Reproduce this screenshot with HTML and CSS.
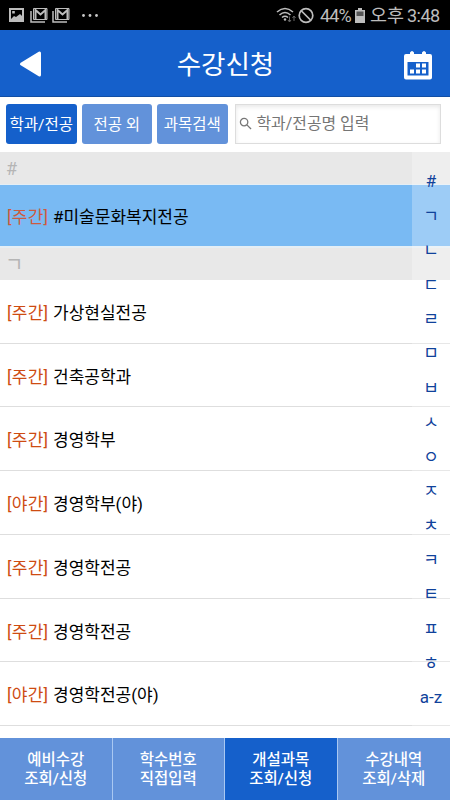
FILE: index.html
```html
<!DOCTYPE html>
<html lang="ko">
<head>
<meta charset="utf-8">
<title>수강신청</title>
<link rel="stylesheet" href="styles.css">
</head>
<body>
<div class="app">
  <div class="status">
    <svg class="status-left" width="100" height="30" viewBox="0 0 100 30">
      <path fill="#bdbdbd" fill-rule="evenodd" d="M9 8h15v14H9zM11 10v9l3-3 2 1 4-3 2 2v-6zM12.200 11h2.600v2.600h-2.600z"/>
      <g id="mail" fill="none" stroke="#bdbdbd">
        <path stroke-width="1.500" d="M31 11v11h14"/>
        <path stroke-width="1" d="M33.500 8.500h13.500v11h-13.500z"/>
        <path stroke-width="2" d="M35.500 20V10l5 4.500L45.500 10v10"/>
      </g>
      <use href="#mail" x="22"/>
      <g fill="#c8c8c8"><circle cx="83.500" cy="15.500" r="1.400"/><circle cx="90" cy="15.500" r="1.400"/><circle cx="96.500" cy="15.500" r="1.400"/></g>
    </svg>
    <div class="status-right">
      <svg width="40" height="30" viewBox="0 0 40 30" fill="none" stroke="#bdbdbd">
        <path stroke-width="1.600" d="M1 12Q9 5 17 12M3.500 15Q9 10 14.500 15M6 17.500Q9 15 12 17.500"/>
        <circle cx="9" cy="19.500" r="1.200" fill="#bdbdbd" stroke="none"/>
        <path stroke="#666" stroke-width="1" d="M13.500 16.500v5M12 20l1.500 2 1.500-2M18 21v-5M16.500 18l1.500-2 1.500 2"/>
        <circle cx="30" cy="15.500" r="6.800" stroke-width="1.700"/><path stroke-width="1.700" d="M25 10.500l10 10"/>
      </svg>
      <span class="percent">44%</span>
      <svg class="battery" width="10" height="30" viewBox="0 0 10 30"><path fill="#bdbdbd" d="M3 8h4v2h3v13H0V10h3z"/><path fill="#555" d="M1.500 11.500h7V16h-7z"/></svg>
      <span class="ampm">오후</span>
      <span class="time">3:48</span>
    </div>
  </div>
  <header class="header">
    <svg class="back" width="24" height="30" viewBox="0 0 24 30"><path fill="#fff" stroke="#fff" stroke-width="3" stroke-linejoin="round" d="M2.500 15L20.500 4v22z"/></svg>
    <h1>수강신청</h1>
    <svg class="calendar" width="30" height="32" viewBox="0 0 30 32">
      <path fill="#fff" d="M3 5h4V3.500q2-3 4 0V5h8V3.500q2-3 4 0V5h4q2 0 2 2v21.500q0 2-2 2H3q-2 0-2-2V7q0-2 2-2z"/>
      <path fill="#1560cb" d="M4.500 13h21v13.500h-21z"/>
      <path fill="#fff" d="M13 14.500h4v4h-4zM19 14.500h4v4h-4zM7 20.500h4v4H7zM13 20.500h4v4h-4zM19 20.500h4v4h-4z"/>
    </svg>
  </header>
  <div class="tools">
    <button class="tab active">학과/전공</button>
    <button class="tab">전공 외</button>
    <button class="tab">과목검색</button>
    <div class="search">
      <svg width="13" height="13" viewBox="0 0 14 14" fill="none" stroke="#777" stroke-width="1.400"><circle cx="5.500" cy="5.500" r="4"/><path d="M8.500 8.500L13 13"/></svg>
      <span>학과/전공명 입력</span>
    </div>
  </div>
  <main class="content">
    <div class="section">#</div>
    <div class="row selected"><span class="kind">[주간]</span><span>#미술문화복지전공</span></div>
    <div class="section second">ㄱ</div>
    <div class="row"><span class="kind">[주간]</span><span>가상현실전공</span></div>
    <div class="row"><span class="kind">[주간]</span><span>건축공학과</span></div>
    <div class="row"><span class="kind">[주간]</span><span>경영학부</span></div>
    <div class="row"><span class="kind">[야간]</span><span>경영학부(야)</span></div>
    <div class="row"><span class="kind">[주간]</span><span>경영학전공</span></div>
    <div class="row"><span class="kind">[주간]</span><span>경영학전공</span></div>
    <div class="row"><span class="kind">[야간]</span><span>경영학전공(야)</span></div>
    <div class="index">
      <span class="latin">#</span><span>ㄱ</span><span>ㄴ</span><span>ㄷ</span><span>ㄹ</span><span>ㅁ</span><span>ㅂ</span><span>ㅅ</span><span>ㅇ</span><span>ㅈ</span><span>ㅊ</span><span>ㅋ</span><span>ㅌ</span><span>ㅍ</span><span>ㅎ</span><span class="latin last">a-z</span>
    </div>
  </main>
  <nav class="nav">
    <div>예비수강<br>조회/신청</div>
    <div>학수번호<br>직접입력</div>
    <div class="active">개설과목<br>조회/신청</div>
    <div>수강내역<br>조회/삭제</div>
  </nav>
</div>
</body>
</html>
```

FILE: styles.css
```css
* { box-sizing: border-box; }
body {
  margin: 0;
  background: #fff;
  font-family: Roboto, "Noto Sans CJK KR", sans-serif;
}
.app {
  width: 450px;
  height: 800px;
  display: flex;
  flex-direction: column;
  overflow: hidden;
}
.status {
  height: 30px;
  flex: none;
  display: flex;
  justify-content: space-between;
  background: #000;
  color: #bdbdbd;
  line-height: 30px;
}
.status-right {
  display: flex;
  padding-right: 11px;
  font-size: 18px;
  white-space: nowrap;
}
.percent { margin-left: 4px; width: 35px; font-size: 18px; letter-spacing: -0.9px; padding-top: 1px; }
.battery { margin: 0 5px 0 0; }
.ampm { width: 37px; padding-top: 1px; font-size: 18.5px; }
.time { width: 32px; padding-top: 1px; letter-spacing: -0.5px; }
.header {
  height: 67px;
  flex: none;
  display: flex;
  align-items: center;
  justify-content: space-between;
  padding: 0 17px 0 19px;
  background: #1560cb;
  border-bottom: 1px solid #124fa5;
  color: #fff;
}
.header h1 {
  margin: 0;
  padding-left: 5px;
  font-family: "Noto Sans CJK KR", sans-serif;
  font-size: 26.5px;
  font-weight: 400;
  line-height: 66px;
}
.back { margin-top: 2px; }
.calendar { margin-top: 3px; }
.tools {
  height: 55px;
  flex: none;
  display: flex;
  gap: 5px;
  padding: 7px 9px 8px 6px;
}
.tab {
  width: 70.5px;
  height: 40px;
  padding: 1px 0 0;
  border: 0;
  border-radius: 3px;
  background: #6292da;
  color: #fff;
  font: 400 15.5px/40px Roboto, "Noto Sans CJK KR", sans-serif;
  white-space: nowrap;
}
.tab.active { background: #1560cb; }
.search {
  flex: 1;
  height: 40px;
  margin-left: 2px;
  display: flex;
  align-items: center;
  gap: 5px;
  padding-left: 3px;
  border: 1px solid #ddd;
  box-shadow: inset 0 2px 4px #e8e8e8;
  color: #757575;
  font-size: 15.9px;
  line-height: 38px;
}
.search svg { margin-top: -1px; }
.content {
  position: relative;
  flex: 1;
  min-height: 0;
  overflow: hidden;
}
.section {
  height: 33px;
  padding-left: 6px;
  border-bottom: 1px solid #e4eef5;
  background: #e8e8e8;
  color: #b5b5b5;
  font-size: 18px;
  line-height: 34px;
}
.section.second { height: 31.75px; padding-left: 5px; border-bottom-color: #e8e8e8; font-size: 20px; }
.row {
  height: 63.75px;
  display: flex;
  padding: 1px 0 0 7px;
  border-bottom: 1px solid #dedede;
  color: #000;
  font-size: 17px;
  line-height: 65px;
}
.row.selected {
  height: 63px;
  padding-top: 0;
  background: #79baf3;
  border-bottom: 2px solid #e4eef5;
}
.kind { width: 46px; flex: none; color: #ce4b12; letter-spacing: 0.25px; }
.selected .kind { color: #cd5a3e; }
.index {
  position: absolute;
  top: 0;
  right: 0;
  width: 38px;
  height: 100%;
  padding-top: 11.5px;
  background: rgba(255, 255, 255, .27);
  color: #10429b;
  font-family: "Noto Sans CJK KR", sans-serif;
  font-size: 17px;
  text-align: center;
}
.index span { display: block; height: 34.4px; line-height: 34.4px; }
.index .latin { font-family: Roboto, sans-serif; font-size: 17px; }
.index .last { padding-top: 1px; }
.nav {
  height: 62.5px;
  flex: none;
  display: grid;
  grid-template-columns: repeat(4, 1fr);
  background: #6292da;
  color: #fff;
  font-size: 15.5px;
  font-weight: 500;
  line-height: 19px;
  text-align: center;
}
.nav div { padding-top: 13.5px; border-right: 1px solid #a9c8f2; }
.nav div:last-child { border-right: 0; }
.nav .active { background: #1560cb; }
```
